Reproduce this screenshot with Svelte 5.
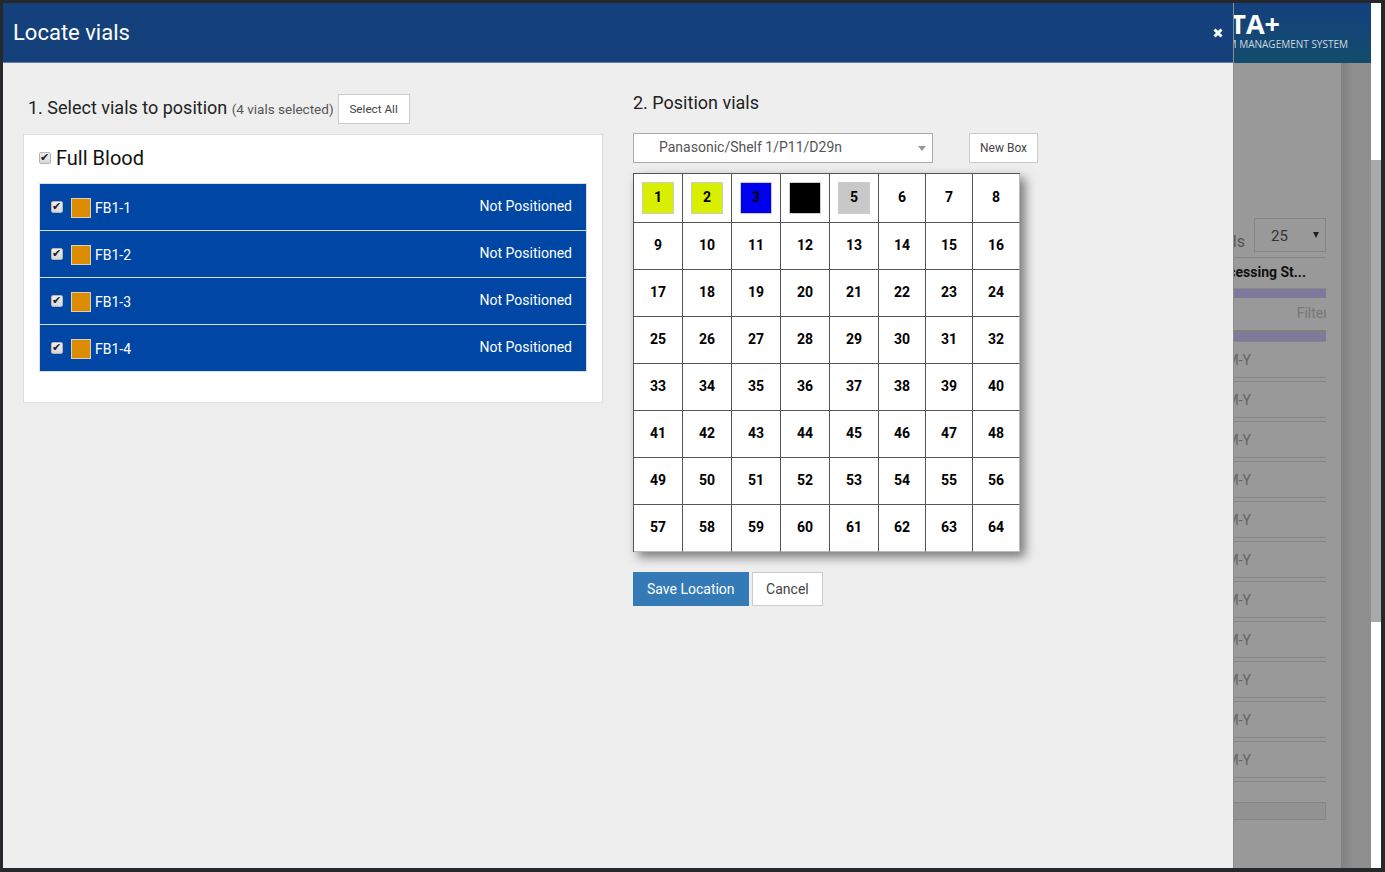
<script>
	const vials = ['FB1-1', 'FB1-2', 'FB1-3', 'FB1-4'];

	// filled positions in the box
	const filled = { 1: 'lime', 2: 'lime', 3: 'blue', 4: 'black', 5: 'grey' };
	const positions = Array.from({ length: 64 }, (_, i) => i + 1);

	const bgRows = Array.from({ length: 11 }, (_, i) => i);
</script>

<div class="screen">
	<!-- page behind the dialog -->
	<div class="page">
		<div class="main">
			<header class="topbar">
				<div class="brand">
					<span class="brand-name">DATA+</span>
					<span class="brand-sub">SYSTEM MANAGEMENT SYSTEM</span>
				</div>
			</header>
			<div class="content">
				<div class="card">
					<div class="page-size">
						<span class="ps-label">Vials</span>
						<span class="ps-select">25<i class="ps-arrow"></i></span>
					</div>
					<div class="col-head">Processing St...</div>
					<div class="purple first"></div>
					<div class="filter">Filter</div>
					<div class="purple second"></div>
					<div class="rows">
						{#each bgRows as r}
							<div class="bg-row">D-M-Y</div>
						{/each}
					</div>
					<div class="pager"></div>
				</div>
				<div class="gutter"></div>
			</div>
		</div>
		<div class="scrollbar">
			<div class="thumb"></div>
		</div>
	</div>

	<!-- dialog -->
	<div class="modal">
		<div class="modal-head">
			<h1>Locate vials</h1>
			<button class="close" aria-label="Close">
				<svg width="10" height="10" viewBox="0 0 10 10">
					<path d="M1.5 1.5l7 7M8.5 1.5l-7 7" stroke="#fff" stroke-width="3" />
				</svg>
			</button>
		</div>
		<div class="modal-body">
			<section class="left">
				<div class="step-head">
					<h2>1. Select vials to position</h2>
					<small>(4 vials selected)</small>
					<button class="btn small select-all">Select All</button>
				</div>
				<div class="panel">
					<label class="group">
						<input type="checkbox" checked />
						<span>Full Blood</span>
					</label>
					<ul class="vials">
						{#each vials as vial}
							<li>
								<input type="checkbox" checked />
								<span class="tube"></span>
								<span class="vial-name">{vial}</span>
								<span class="status">Not Positioned</span>
							</li>
						{/each}
					</ul>
				</div>
			</section>

			<section class="right">
				<h2>2. Position vials</h2>
				<div class="box-picker">
					<div class="select">
						Panasonic/Shelf 1/P11/D29n
						<i class="caret"></i>
					</div>
					<button class="btn small new-box">New Box</button>
				</div>
				<div class="grid">
					{#each positions as n}
						<div class="cell">
							{#if filled[n]}
								<span class="swatch {filled[n]}">{n}</span>
							{:else}
								{n}
							{/if}
						</div>
					{/each}
				</div>
				<div class="actions">
					<button class="btn primary">Save Location</button>
					<button class="btn">Cancel</button>
				</div>
			</section>
		</div>
	</div>
</div>

<style>
	:global(body) {
		margin: 0;
		font-family: Roboto, "Liberation Sans", sans-serif;
	}

	.screen {
		position: relative;
		width: 1385px;
		height: 872px;
		box-sizing: border-box;
		border-style: solid;
		border-color: #26282b;
		border-width: 3px 4px 4px 3px;
		overflow: hidden;
		background: #fff;
	}

	/* background page */
	.page {
		display: flex;
		height: 100%;
		background: #8f8f90;
	}

	.main {
		flex: 1;
		min-width: 0;
		display: flex;
		flex-direction: column;
	}

	.topbar {
		height: 60px;
		flex: none;
		display: flex;
		justify-content: flex-end;
		background: linear-gradient(#13407e, #134c6c);
		color: #fff;
	}

	.brand {
		display: flex;
		flex-direction: column;
		align-items: flex-end;
		padding-right: 23px;
	}

	.brand-name {
		margin: 7px 68px 0 0;
		font: 700 27px/28px "Open Sans", sans-serif;
	}

	.brand-sub {
		font: 400 10px/12px "Open Sans", sans-serif;
		color: #cfd8e0;
		white-space: nowrap;
	}

	.content {
		flex: 1;
		display: flex;
		min-height: 0;
	}

	.card {
		flex: 1;
		background: #999;
		padding: 155px 15px 0 0;
		box-sizing: border-box;
		color: #6e6e6e;
		font-size: 14px;
	}

	.gutter {
		width: 30px;
		background: linear-gradient(90deg, #808081, #8f8f90 12px);
	}

	.page-size {
		display: flex;
		justify-content: flex-end;
		align-items: flex-end;
		height: 34px;
		padding-bottom: 5px;
		border-bottom: 1px solid #858585;
	}

	.ps-label {
		font-size: 16px;
		margin-right: 9px;
		color: #555;
		line-height: 20px;
	}

	.ps-select {
		position: relative;
		width: 72px;
		height: 34px;
		box-sizing: border-box;
		border: 1px solid #858585;
		padding-left: 16px;
		font-size: 15px;
		line-height: 34px;
		color: #333;
	}

	.ps-arrow {
		position: absolute;
		right: 6px;
		top: 13px;
		border: 3px solid transparent;
		border-top: 6px solid #222;
		border-bottom: 0;
	}

	.col-head {
		margin-top: 6px;
		font-weight: 700;
		color: #111;
		white-space: nowrap;
		line-height: 17px;
		height: 17px;
		text-align: right;
		padding-right: 20px;
	}

	.purple {
		height: 9px;
		background: #7f7a9c;
		border-top: 1px solid #8a8a8a;
	}

	.purple.first {
		margin-top: 7px;
	}

	.filter {
		height: 32px;
		line-height: 30px;
		text-align: right;
		overflow: hidden;
		white-space: nowrap;
		color: #777;
		margin-right: -2px;
		padding: 0;
		clip-path: inset(0 2px 0 0);
	}

	.purple.second {
		border-top: 2px solid #808080;
		border-bottom: 1px solid #808080;
	}

	.bg-row {
		height: 40px;
		box-sizing: border-box;
		padding: 9px 75px 0 0;
		text-align: right;
		line-height: 18px;
		color: #666;
		border-bottom: 1px solid #858585;
		background: linear-gradient(#858585, #858585) no-repeat 0 calc(100% - 3px) / 100% 1px;
	}

	.bg-row:first-child {
		border-top: 1px solid #858585;
		height: 41px;
		margin-top: -1px;
	}

	.pager {
		height: 18px;
		box-sizing: border-box;
		margin-top: 20px;
		border: 1px solid #858585;
		background: #929292;
	}

	.scrollbar {
		width: 10px;
		background: #fff;
	}

	.thumb {
		margin-top: 157px;
		height: 462px;
		background: #a9a9a9;
	}

	/* dialog */
	.modal {
		position: absolute;
		left: 0;
		top: 0;
		bottom: 0;
		width: 1230px;
		background: #eee;
		border-right: 1px solid #8d8d8d;
		color: #222;
	}

	.modal-head {
		height: 60px;
		box-sizing: border-box;
		display: flex;
		align-items: center;
		justify-content: space-between;
		padding: 0 10px;
		background: #14407c;
		border-bottom: 1px solid #5f7fa8;
	}

	h1 {
		margin: 0;
		font-size: 22px;
		font-weight: 400;
		color: #fff;
	}

	.close {
		display: flex;
		padding: 0;
		background: none;
		border: 0;
	}

	.modal-body {
		display: flex;
		padding-top: 30px;
	}

	.left {
		width: 580px;
		margin-left: 20px;
	}

	.step-head {
		display: flex;
		align-items: center;
		height: 31px;
		margin-bottom: 10px;
		padding-left: 5px;
		box-sizing: border-box;
	}

	h2 {
		margin: 0;
		font-size: 18px;
		font-weight: 400;
		color: #222;
	}

	.step-head h2 {
		margin-bottom: 2px;
	}

	.step-head small {
		font-size: 13.5px;
		color: #555;
		margin: 0 4px 0 4.5px;
	}

	.panel {
		box-sizing: border-box;
		height: 269px;
		background: #fff;
		border: 1px solid #ddd;
		padding: 0 15px;
	}

	.group {
		display: flex;
		align-items: center;
		gap: 5px;
		height: 48px;
		padding-bottom: 2px;
		box-sizing: border-box;
		font-size: 20px;
		color: #111;
	}

	input[type='checkbox'] {
		appearance: none;
		position: relative;
		flex: none;
		width: 12px;
		height: 12px;
		margin: 0;
		box-sizing: border-box;
		border: 1px solid #b5b5b5;
		border-radius: 2px;
		background: linear-gradient(#efefef, #d8d8d8);
	}

	input[type='checkbox']::after {
		content: '✔';
		position: absolute;
		left: 0;
		top: -1px;
		font: 11px/12px "DejaVu Sans", sans-serif;
		color: #222;
	}

	.vials {
		list-style: none;
		margin: 0;
		padding: 0;
		border: 1px solid #ddd;
	}

	.vials li {
		display: flex;
		align-items: center;
		height: 46px;
		padding: 0 14px 0 11px;
		background: #0047a5;
		color: #fff;
		font-size: 14px;
		border-top: 1px solid #ddd;
	}

	.vials li:first-child {
		border-top: 0;
	}

	.tube {
		width: 20px;
		height: 20px;
		margin: 2px 4px 0 8px;
		background: #dc8c00;
		outline: 1px solid #d8d0c0;
		outline-offset: -1px;
	}

	.vial-name {
		margin-top: 2px;
	}

	.status {
		margin: -2px 0 0 auto;
	}

	.right {
		margin: -1px 0 0 30px;
	}

	.right h2 {
		line-height: 21px;
	}

	.box-picker {
		display: flex;
		gap: 36px;
		margin-top: 20px;
	}

	.select {
		position: relative;
		width: 300px;
		height: 30px;
		box-sizing: border-box;
		border: 1px solid #aaa;
		background: #fff;
		padding-left: 25px;
		font-size: 14px;
		line-height: 26px;
		color: #555;
	}

	.caret {
		position: absolute;
		right: 6px;
		top: 12px;
		border: 4px solid transparent;
		border-top: 5px solid #999;
		border-bottom: 0;
	}

	.btn {
		box-sizing: border-box;
		height: 34px;
		padding: 0 13px;
		background: #fff;
		border: 1px solid #ccc;
		font: 14px Roboto, sans-serif;
		color: #444;
	}

	.btn.small {
		height: 30px;
		padding: 0 10px;
		font-size: 12px;
	}

	.btn.small.select-all {
		width: 72px;
		padding: 0;
		font-size: 11.7px;
	}

	.btn.primary {
		background: #337ab7;
		border-color: #337ab7;
		color: #fff;
	}

	.grid {
		display: grid;
		grid-template-columns: repeat(5, 49px) repeat(3, 47px);
		grid-template-rows: 49px repeat(7, 47px);
		width: 387px;
		box-sizing: border-box;
		margin-top: 10px;
		background: #fff;
		border-top: 1px solid #555;
		border-left: 1px solid #555;
		box-shadow: 5px 5px 10px rgba(0, 0, 0, 0.5);
	}

	.cell {
		box-sizing: border-box;
		display: flex;
		align-items: center;
		justify-content: center;
		padding-bottom: 2px;
		border-right: 1px solid #555;
		border-bottom: 1px solid #555;
		font-size: 14px;
		font-weight: 700;
		color: #000;
	}

	.cell:nth-last-child(-n + 8) {
		border-bottom-color: #bbb;
	}

	.cell:nth-child(8n) {
		border-right-color: #bbb;
	}

	.swatch {
		width: 32px;
		height: 32px;
		box-sizing: border-box;
		display: flex;
		align-items: center;
		justify-content: center;
		margin-bottom: -2px;
		padding-bottom: 2px;
		border: 1px solid #ccc;
	}

	.swatch.lime {
		background: #d9ef00;
	}

	.swatch.blue {
		background: #0000f0;
	}

	.swatch.black {
		background: #000;
	}

	.swatch.grey {
		background: #c8c8c8;
	}

	.actions {
		display: flex;
		gap: 3px;
		margin-top: 20px;
	}

	.actions .btn + .btn {
		padding: 0 13.5px;
	}
</style>
